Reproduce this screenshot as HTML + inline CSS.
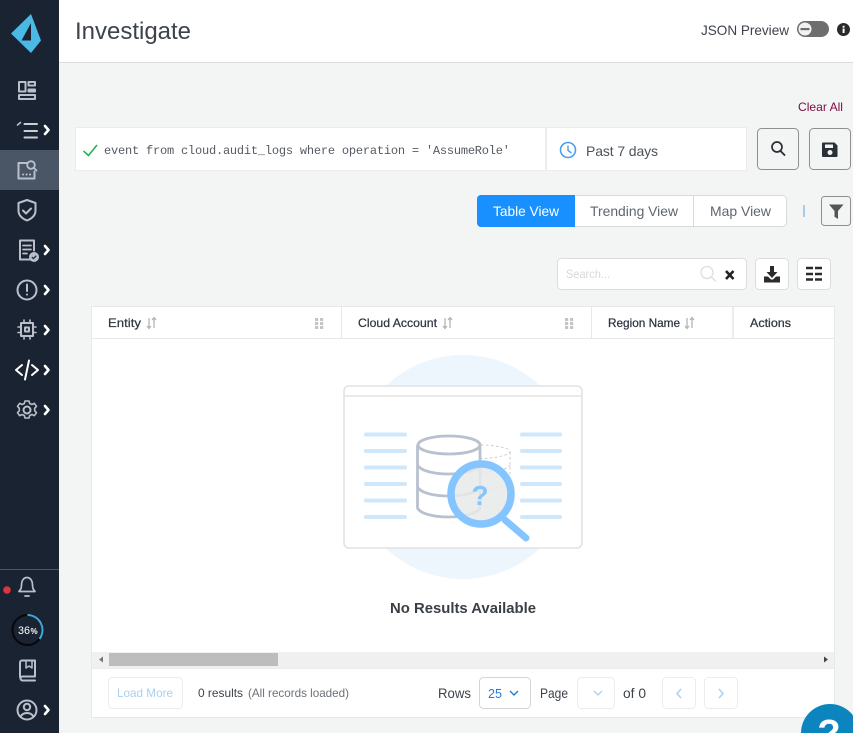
<!DOCTYPE html>
<html lang="en"><head><meta charset="utf-8"><title>Investigate</title>
<style>
html,body{margin:0;padding:0;width:853px;height:733px;overflow:hidden;background:#f3f5f5}
svg{display:block;font-family:"Liberation Sans",sans-serif}
.m{font-family:"Liberation Mono",monospace}
.h{font-size:12px;fill:#2f3640;stroke:#2f3640;stroke-width:.25}
.s{fill:none;stroke:#b9c0cc;stroke-linecap:round;stroke-linejoin:round}
.c{fill:none;stroke:#fff;stroke-linecap:round;stroke-linejoin:round}
.g{fill:#c4c4c4}
</style></head><body>
<svg width="853" height="733" viewBox="0 0 853 733" xmlns="http://www.w3.org/2000/svg">
<rect width="853" height="733" fill="#f3f5f5"/>
<!-- header -->
<rect x="59" y="0" width="794" height="62" fill="#fff"/>
<rect x="59" y="62" width="794" height="1" fill="#dcdcdc"/>
<text x="75" y="39" font-size="24" fill="#3d434b" textLength="116" lengthAdjust="spacingAndGlyphs">Investigate</text>
<text x="701" y="35" font-size="14" fill="#3d434b" textLength="88" lengthAdjust="spacingAndGlyphs">JSON Preview</text>
<rect x="797" y="21" width="32" height="16" rx="8" fill="#6e6e6e"/>
<circle cx="805" cy="29" r="7" fill="#f2f2f2" stroke="#6e6e6e" stroke-width="1"/>
<rect x="800.500" y="28" width="9" height="2.200" fill="#6e6e6e"/>
<circle cx="843.500" cy="29.500" r="6.500" fill="#2b2b2b"/>
<rect x="842.600" y="28.500" width="2" height="4.500" fill="#fff"/><rect x="842.600" y="25.800" width="2" height="1.800" fill="#fff"/>
<text x="798" y="111" font-size="12" fill="#7b0a3c" textLength="45" lengthAdjust="spacingAndGlyphs">Clear All</text>
<!-- query -->
<rect x="75.500" y="127.500" width="470" height="43" fill="#fff" stroke="#ececec"/>
<rect x="546.500" y="127.500" width="200" height="43" fill="#fff" stroke="#ececec"/>
<path d="M83.500 151l5 4.500 8.500-10.500" fill="none" stroke="#22b455" stroke-width="1.600"/>
<text x="104" y="154" class="m" font-size="12" fill="#555b63" textLength="406" lengthAdjust="spacing" xml:space="preserve">event from cloud.audit_logs where operation = 'AssumeRole'</text>
<circle cx="568" cy="150" r="7.500" fill="none" stroke="#4a9ff0" stroke-width="1.600"/>
<path d="M568 145.500v5l3.500 2.500" fill="none" stroke="#4a9ff0" stroke-width="1.400"/>
<text x="586" y="156" font-size="14" fill="#4d535b" textLength="72" lengthAdjust="spacing" xml:space="preserve">Past 7 days</text>
<rect x="757.500" y="128.500" width="41" height="41" rx="4" fill="#f3f5f5" stroke="#8f8f8f"/>
<circle cx="777" cy="147" r="5" fill="none" stroke="#2b2f36" stroke-width="1.700"/>
<path d="M780.500 151l4 4" stroke="#2b2f36" stroke-width="1.900" stroke-linecap="round"/>
<rect x="809.500" y="128.500" width="41" height="41" rx="4" fill="#f3f5f5" stroke="#8f8f8f"/>
<path d="M823 142.500h11.500l3 3v10.500a1 1 0 0 1-1 1h-13.500a1 1 0 0 1-1-1v-12.500a1 1 0 0 1 1-1z" fill="#2b2f36"/>
<rect x="825" y="144.500" width="8" height="3.500" fill="#f3f5f5"/>
<circle cx="830" cy="152.500" r="2.500" fill="#f3f5f5"/>
<!-- view tabs -->
<rect x="477.500" y="195.500" width="309" height="31" rx="4" fill="#fff" stroke="#dadada"/>
<path d="M481 195h94v32h-94a4 4 0 0 1-4-4v-24a4 4 0 0 1 4-4z" fill="#1890ff"/>
<rect x="693" y="196" width="1" height="30" fill="#dadada"/>
<text x="493" y="216" font-size="14" fill="#fff" textLength="66" lengthAdjust="spacingAndGlyphs">Table View</text>
<text x="590" y="216" font-size="14" fill="#5f666e" textLength="88" lengthAdjust="spacingAndGlyphs">Trending View</text>
<text x="710" y="216" font-size="14" fill="#5f666e" textLength="61" lengthAdjust="spacingAndGlyphs">Map View</text>
<rect x="803" y="205" width="2" height="12" fill="#a9cde9"/>
<rect x="821.500" y="196.500" width="29" height="29" rx="3" fill="#f3f5f5" stroke="#8f8f8f"/>
<path d="M829 204.500h14.500l-5.500 6.500v8l-3.500-2.300v-5.700z" fill="#555"/>
<!-- search row -->
<rect x="557.500" y="258.500" width="189" height="31" rx="4" fill="#fff" stroke="#dcdcdc"/>
<text x="566" y="278" font-size="12" fill="#d6d9dc" textLength="44" lengthAdjust="spacingAndGlyphs">Search...</text>
<circle cx="707" cy="272.500" r="6" fill="none" stroke="#dedede" stroke-width="1.300"/>
<path d="M711.500 277l4.500 4.500" stroke="#dedede" stroke-width="1.300"/>
<path d="M726 271l7.500 8M733.500 271l-7.500 8" stroke="#222" stroke-width="2.600"/>
<rect x="755.500" y="258.500" width="33" height="31" rx="4" fill="#fff" stroke="#dcdcdc"/>
<path d="M770 266h4v6h3.500l-5.500 6-5.500-6h3.500z" fill="#2b2b2b"/>
<path d="M764 276.500h4l3 3h2l3-3h4v6h-16z" fill="#2b2b2b"/>
<rect x="797.500" y="258.500" width="33" height="31" rx="4" fill="#fff" stroke="#dcdcdc"/>
<path d="M806 268h7M815 268h7M806 274h7M815 274h7M806 279.500h7M815 279.500h7" stroke="#2b2b2b" stroke-width="2.600"/>
<!-- table -->
<rect x="91.500" y="306.500" width="743" height="411" fill="#fff" stroke="#e8e8e8"/>
<rect x="92" y="338" width="742" height="1" fill="#e8e8e8"/>
<rect x="341" y="307" width="1" height="31" fill="#e8e8e8"/>
<rect x="591" y="307" width="1" height="31" fill="#e8e8e8"/>
<rect x="732" y="307" width="2" height="31" fill="#ececec"/>
<text x="108" y="327" class="h" textLength="33" lengthAdjust="spacingAndGlyphs">Entity</text>
<text x="358" y="327" class="h" textLength="79" lengthAdjust="spacingAndGlyphs">Cloud Account</text>
<text x="608" y="327" class="h" textLength="72" lengthAdjust="spacingAndGlyphs">Region Name</text>
<text x="750" y="327" class="h" textLength="41" lengthAdjust="spacingAndGlyphs">Actions</text>
<g id="sort" fill="none" stroke="#b5b5b5" stroke-width="1.300">
<path d="M149 318v10M147 326l2 2.500 2-2.500M154 328v-10M152 320l2-2.500 2 2.500"/>
<path d="M445 318v10M443 326l2 2.500 2-2.500M450 328v-10M448 320l2-2.500 2 2.500"/>
<path d="M687 318v10M685 326l2 2.500 2-2.500M692 328v-10M690 320l2-2.500 2 2.500"/>
</g>
<g class="g">
<rect x="315" y="318" width="3.200" height="3"/><rect x="320" y="318" width="3.200" height="3"/><rect x="315" y="322" width="3.200" height="3"/><rect x="320" y="322" width="3.200" height="3"/><rect x="315" y="326" width="3.200" height="3"/><rect x="320" y="326" width="3.200" height="3"/>
<rect x="565" y="318" width="3.200" height="3"/><rect x="570" y="318" width="3.200" height="3"/><rect x="565" y="322" width="3.200" height="3"/><rect x="570" y="322" width="3.200" height="3"/><rect x="565" y="326" width="3.200" height="3"/><rect x="570" y="326" width="3.200" height="3"/>
</g>
<!-- illustration -->
<circle cx="463" cy="467" r="112" fill="#edf6fd"/>
<rect x="344" y="386" width="238" height="162" rx="5" fill="#fff" stroke="#e2e2e2" stroke-width="1.600"/>
<path d="M344 396h238" stroke="#e2e2e2" stroke-width="1.600"/>
<g stroke="#cfe7fb" stroke-width="4" stroke-linecap="round">
<path d="M366 434.500h39M366 451h39M366 467.500h39M366 484h39M366 500.500h39M366 517h39"/>
<path d="M522 434.500h38M522 451h38M522 467.500h38M522 484h38M522 500.500h38M522 517h38"/>
</g>
<g fill="none" stroke="#c9ccd2" stroke-width="1" stroke-dasharray="2.500 2.500">
<path d="M481 445c14 0 29 3 29 6.500s-15 7-29 7"/>
<path d="M510 452v30M510 482c0 4-14 6-29 8"/>
<path d="M510 465c0 4-14 6-29 8"/>
</g>
<g fill="none" stroke="#b8c1cf" stroke-width="2.800">
<ellipse cx="449" cy="445" rx="31" ry="9"/>
<path d="M417.500 445v63c3 6 17 9 31 9s28-3 31.500-9v-63"/>
<path d="M417.500 465c3 6 17 9 31 9s28-3 31.500-9"/>
<path d="M417.500 487c3 6 17 9 31 9s28-3 31.500-9"/>
</g>
<circle cx="481" cy="494" r="30" fill="#e8eaea" fill-opacity=".85" stroke="#85c5ff" stroke-width="7.500"/>
<path d="M505 520l21 18" stroke="#85c5ff" stroke-width="7" stroke-linecap="round"/>
<text x="480" y="505" text-anchor="middle" font-size="28" font-weight="700" fill="#85c5ff">?</text>
<text x="390" y="613" font-size="15" font-weight="700" fill="#3a3f45" textLength="146" lengthAdjust="spacingAndGlyphs">No Results Available</text>
<!-- scrollbar -->
<rect x="92" y="652" width="742" height="16" fill="#f0f0f0"/>
<rect x="109" y="653" width="169" height="13" fill="#bdbdbd"/>
<path d="M103 656.500v6l-4-3z" fill="#777"/>
<path d="M824 656.500v6l4-3z" fill="#444"/>
<rect x="92" y="668" width="742" height="1" fill="#ececec"/>
<!-- footer -->
<rect x="108.500" y="677.500" width="74" height="31" rx="4" fill="#fff" stroke="#ececec"/>
<text x="117" y="697" font-size="12" fill="#a9d0f0" textLength="56" lengthAdjust="spacingAndGlyphs">Load More</text>
<text x="198" y="697" font-size="12" fill="#3d434b" textLength="45" lengthAdjust="spacingAndGlyphs">0 results</text>
<text x="248" y="697" font-size="12" fill="#6c7279" textLength="101" lengthAdjust="spacingAndGlyphs">(All records loaded)</text>
<text x="438" y="698" font-size="14" fill="#3d434b" textLength="33" lengthAdjust="spacingAndGlyphs">Rows</text>
<rect x="479.500" y="677.500" width="51" height="31" rx="4" fill="#fff" stroke="#d4d4d4"/>
<text x="488" y="698" font-size="13" fill="#1f7fd6" textLength="14" lengthAdjust="spacingAndGlyphs">25</text>
<path d="M510 691l4 4 4-4" fill="none" stroke="#1f7fd6" stroke-width="1.400"/>
<text x="540" y="698" font-size="14" fill="#3d434b" textLength="28" lengthAdjust="spacingAndGlyphs">Page</text>
<rect x="577.500" y="677.500" width="37" height="31" rx="4" fill="#fff" stroke="#ececec"/>
<path d="M594 691l4 4 4-4" fill="none" stroke="#a9d0f0" stroke-width="1.300"/>
<text x="623" y="698" font-size="14" fill="#3d434b" textLength="23" lengthAdjust="spacingAndGlyphs">of 0</text>
<rect x="662.500" y="677.500" width="33" height="31" rx="4" fill="#fff" stroke="#ececec"/>
<path d="M681 689l-4 4.500 4 4.500" fill="none" stroke="#a9d0f0" stroke-width="1.400"/>
<rect x="704.500" y="677.500" width="33" height="31" rx="4" fill="#fff" stroke="#ececec"/>
<path d="M719 689l4 4.500-4 4.500" fill="none" stroke="#a9d0f0" stroke-width="1.400"/>
<circle cx="830" cy="733" r="29" fill="#0c84bd"/>
<text x="829" y="746" text-anchor="middle" font-size="38" font-weight="700" fill="#fff">?</text>
<!-- sidebar -->
<rect width="59" height="733" fill="#1a2332"/>
<rect y="150" width="59" height="40" fill="#4a5666"/>
<path d="M31 14L11 33.500 31 53 41 40.500z" fill="#4bb9e6"/>
<path d="M31 23L21.500 40.500H31z" fill="#1a2332"/>
<g class="s" stroke-width="2">
<path d="M19 82h6.500v9.500h-6.500zM28.500 82h6.500v3.500h-6.500zM28.500 89.500h6.500v2h-6.500zM19 95h16v4h-16z"/>
<path d="M24.500 124h12.500M24.500 131h12.500M24.500 137.500h12.500" stroke="#c9ced7"/>
<path d="M17.500 125l3-2.500" stroke-width="1.600"/>
<path d="M27 163h-8.500v15.500h16v-7"/>
<circle cx="31" cy="165" r="3.800" stroke-width="1.800"/>
<path d="M34 168l2.500 2.500" stroke-width="1.800"/>
<path d="M23 174.500h.1M26.500 174.500h.1M30 174.500h.1"/>
<path d="M27 200l8.500 3v7.500c0 5-3.500 8-8.500 10-5-2-8.500-5-8.500-10V203z"/>
<path d="M23 210.500l3 3 5-5"/>
<path d="M31 259.500h-11v-19h14v10"/>
<path d="M23 245.500h8M23 249.500h8M23 253.500h4" stroke-width="1.700"/>
<circle cx="27" cy="290" r="9.500"/>
<path d="M27 284.500v6.500M27 294.500v.1"/>
<path d="M21 323h12v13H21z"/>
<path d="M25 327.500h4v4h-4z"/>
<path d="M24 320v3M30 320v3M24 336v3M30 336v3M18 327h3M18 332.500h3M33 327h3M33 332.500h3" stroke-width="1.600"/>
<circle cx="27" cy="410" r="3.500"/>
<path d="M25 401h4l.7 2.500 2.300 1 2.300-1.200 2.200 3-1.800 1.900v2.600l1.800 1.900-2.200 3-2.300-1.200-2.300 1-.7 2.500h-4l-.7-2.500-2.300-1-2.300 1.200-2.200-3 1.800-1.900v-2.600l-1.800-1.900 2.200-3 2.300 1.200 2.300-1z" stroke-width="1.600"/>
<path d="M22 581.500c1-2.500 3-4 5-4s4 1.500 5 4c.7 2 .3 5 1 7 .3 1 1.500 2 2 3h-16c.5-1 1.700-2 2-3 .7-2 .3-5 1-7z" stroke-width="1.700"/>
<path d="M25 596h4" stroke-width="1.700"/>
<path d="M20 677v-14.500a2 2 0 0 1 2-2h13v16H22.500a2 2 0 0 0 0 4H35"/>
<path d="M26 661v7l3-2 3 2v-7" stroke-width="1.500"/>
<circle cx="27" cy="710" r="9.500"/>
<circle cx="27" cy="707" r="3.200"/>
<path d="M20.500 716.500c1.500-2.500 4-3.500 6.500-3.500s5 1 6.500 3.500"/>
</g>
<path d="M22 365l-6 5 6 5M32 365l6 5-6 5M29 360.500l-4 19" class="c" stroke-width="2"/>
<circle cx="34" cy="257" r="5" fill="#b9c0cc"/>
<path d="M31.800 257l1.700 1.600 2.800-2.900" fill="none" stroke="#1a2332" stroke-width="1.200"/>
<g class="c" stroke-width="2.600">
<path d="M45 126l3.500 4-3.500 4"/><path d="M45 246l3.500 4-3.500 4"/><path d="M45 286l3.500 4-3.500 4"/><path d="M45 326l3.500 4-3.500 4"/><path d="M45 366l3.500 4-3.500 4"/><path d="M45 406l3.500 4-3.500 4"/><path d="M45 706l3.500 4-3.500 4"/>
</g>
<rect y="569" width="59" height="1" fill="#4c5561"/>
<circle cx="7" cy="590" r="3.800" fill="#d9363e"/>
<circle cx="27.500" cy="630" r="15" fill="none" stroke="#05080c" stroke-width="2"/>
<path d="M27.500 615a15 15 0 0 1 12 24" fill="none" stroke="#3ea9d8" stroke-width="2"/>
<text x="18" y="634" font-size="11" fill="#fff" textLength="12" lengthAdjust="spacingAndGlyphs">36</text>
<text x="30.500" y="634" font-size="8" font-weight="700" fill="#fff">%</text>
</svg>
</body></html>
